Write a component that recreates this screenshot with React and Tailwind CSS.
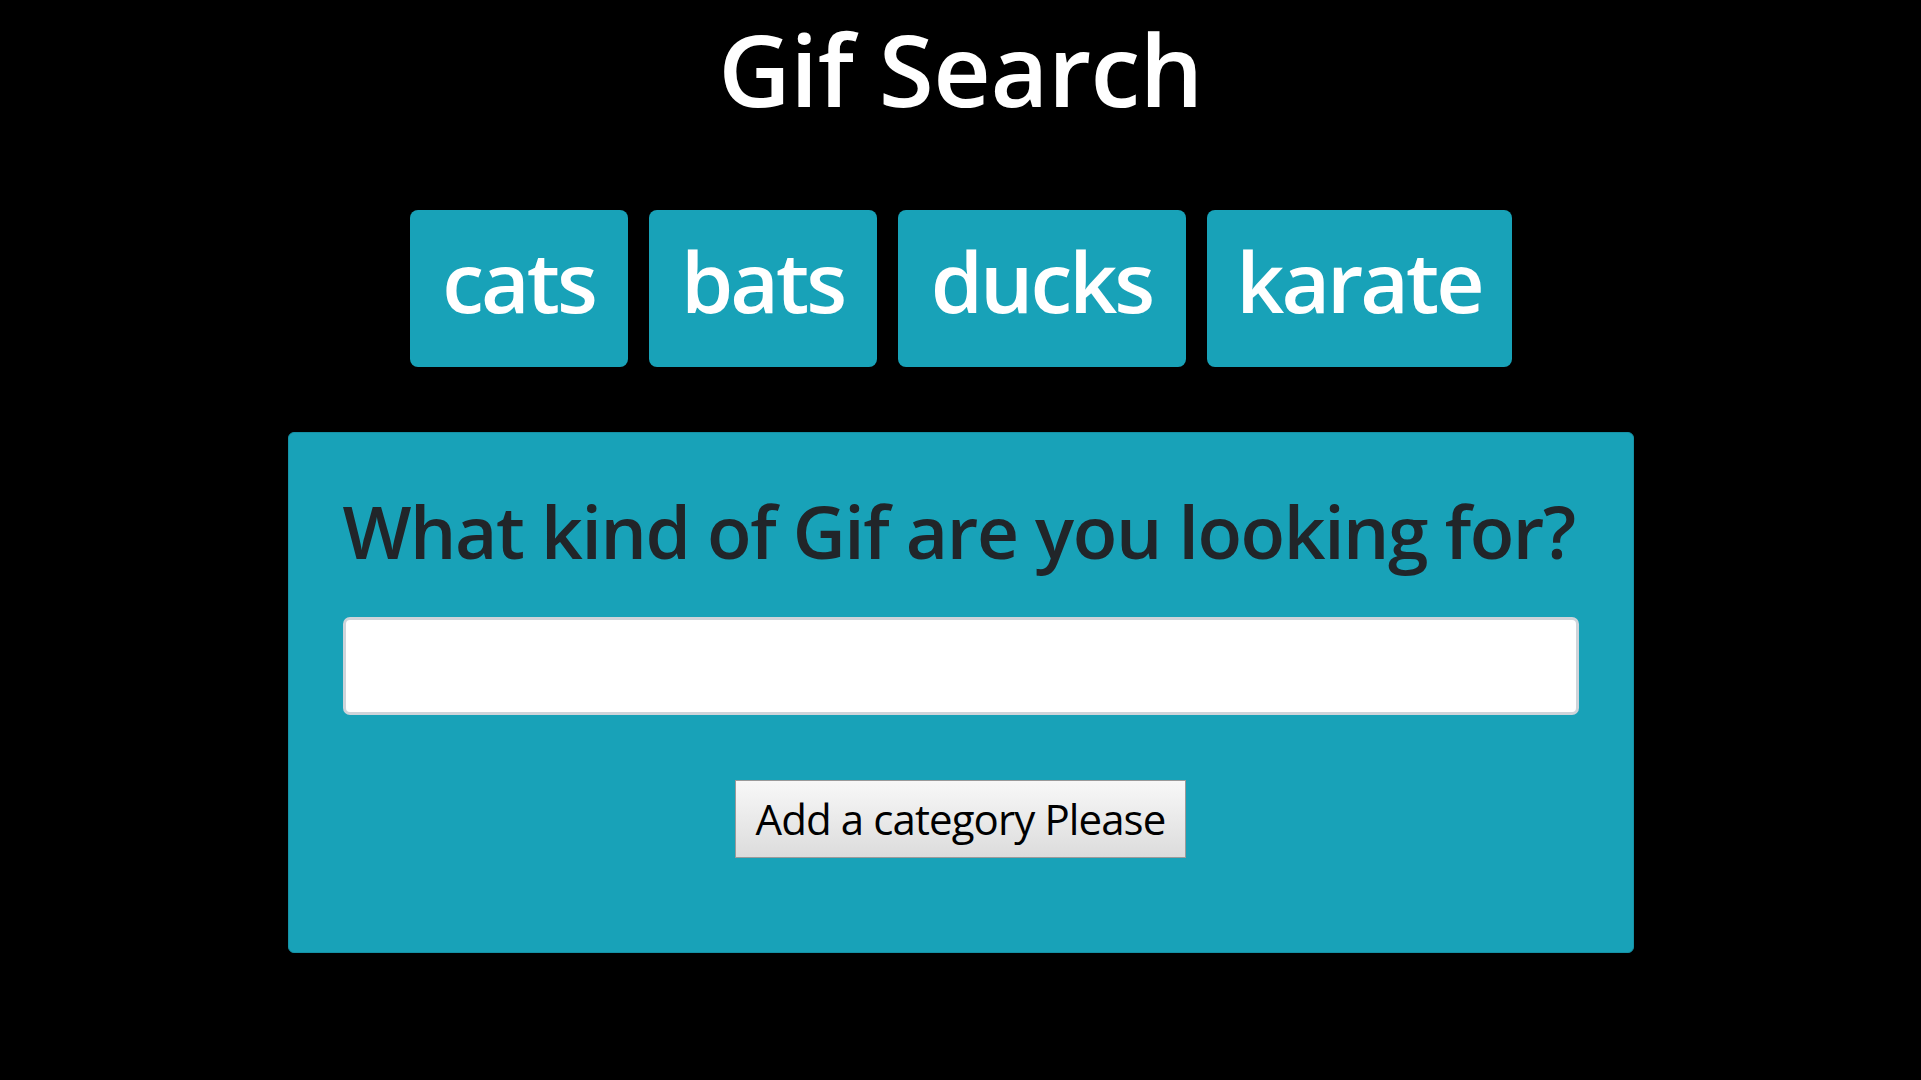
import React, { useState } from "react";

const categories = [
  { label: "cats", width: "w-[218px]" },
  { label: "bats", width: "w-[228px]" },
  { label: "ducks", width: "w-[288px]" },
  { label: "karate", width: "w-[305px]" },
];

export default function App() {
  const [value, setValue] = useState("");

  return (
    <div className="min-h-screen w-full bg-black flex flex-col items-center font-['Open_Sans',_'Noto_Sans',_sans-serif]">
      {/* title */}
      <h1 className="h-[210px] text-white text-[100px] font-semibold leading-[1.37] tracking-[-0.5px]">
        Gif Search
      </h1>

      {/* category buttons */}
      <div className="flex gap-[21px]">
        {categories.map((c) => (
          <button
            key={c.label}
            className={`${c.width} h-[157px] pb-[16px] rounded-[8px] bg-[#18a2b8] text-white text-[84px] font-semibold leading-none tracking-[-3px]`}
          >
            {c.label}
          </button>
        ))}
      </div>

      {/* search card */}
      <div className="mt-[65px] w-[1346px] h-[521px] rounded-[6px] bg-[#18a2b8] border border-[#1591a5] px-[54px] flex flex-col">
        <h2 className="pt-[54px] text-[#212529] text-[73px] font-semibold leading-[1.2] tracking-[-1.4px] whitespace-nowrap">
          What kind of Gif are you looking for?
        </h2>
        <input
          value={value}
          onChange={(e) => setValue(e.target.value)}
          className="mt-[42px] w-full h-[98px] bg-white rounded-[7px] border-[3px] border-[#ced4da] outline-none px-4 text-4xl"
        />
        <div className="flex justify-center mt-[65px]">
          <button className="w-[451px] h-[78px] border border-[#9a9a9a] bg-gradient-to-b from-[#f8f8f8] to-[#dcdcdc] text-black text-[42px] leading-none tracking-[-0.9px]">
            Add a category Please
          </button>
        </div>
      </div>
    </div>
  );
}
